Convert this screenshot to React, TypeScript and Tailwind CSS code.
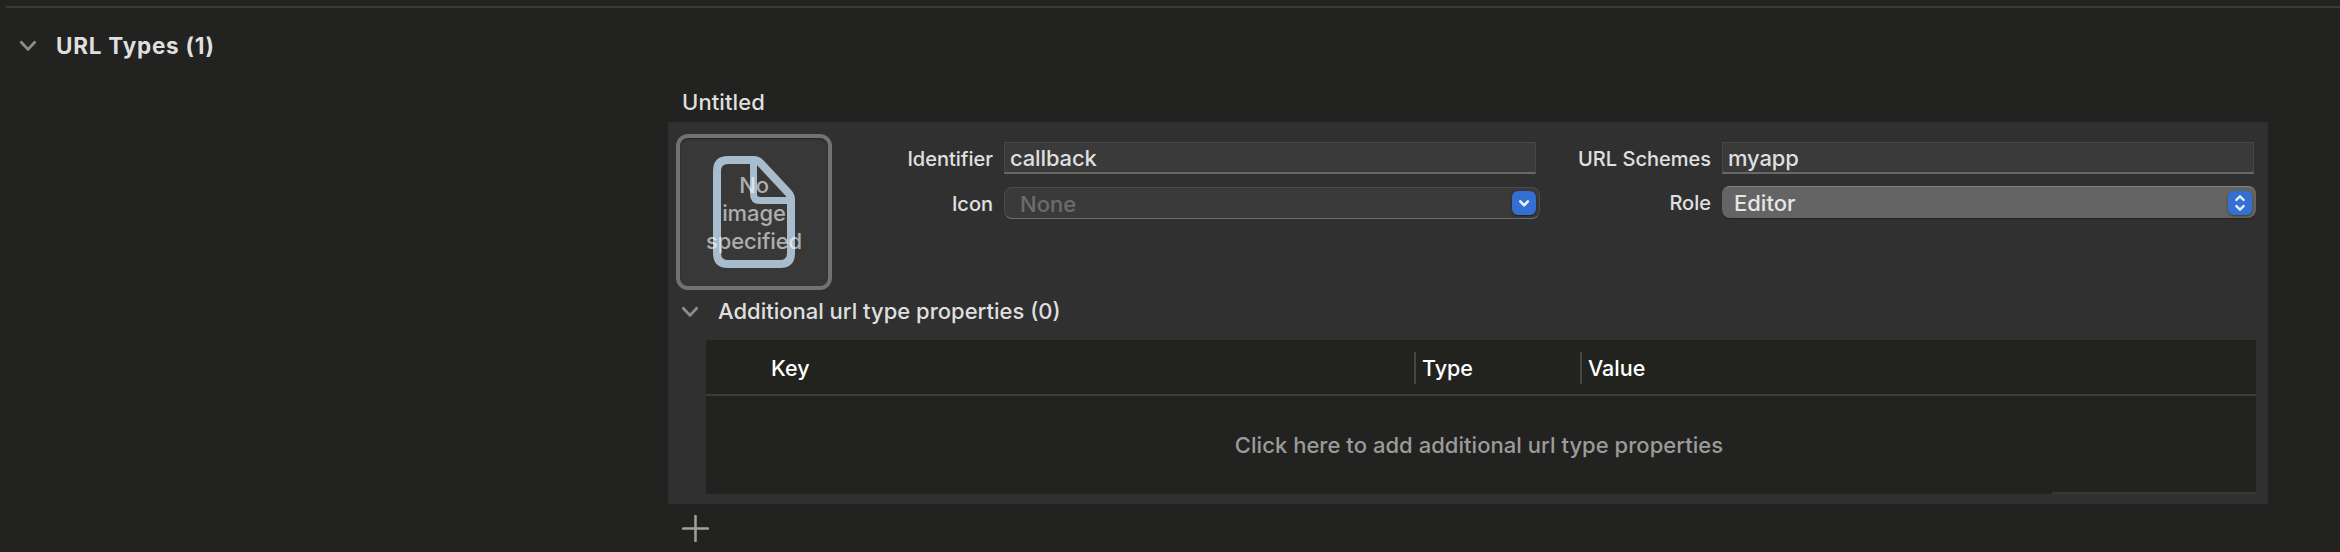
import React from "react";

const Chevron = () => (
  <svg width="18" height="12" viewBox="0 0 18 12" fill="none" stroke="#8c8c8b" strokeWidth="2.8" strokeLinecap="round" strokeLinejoin="round">
    <path d="M2.3 2.2 9 9.4l6.700-7.200" />
  </svg>
);

const Label = ({ children, className }: { children: string; className: string }) => (
  <span className={`flex shrink-0 items-center justify-end pt-0.5 text-[20px] font-medium whitespace-nowrap text-[#e0e0e0] ${className}`}>{children}</span>
);

const TextField = ({ value }: { value: string }) => (
  <div className="ml-[11px] flex w-[532px] items-center border border-b-2 border-[#484848] border-b-[#686868] bg-[#3a3a3a] pt-px pl-[5px] text-[22px] font-[450] tracking-[-0.15px]">{value}</div>
);

export default function App() {
  return (
    <main className="flex h-[552px] w-[2340px] flex-col overflow-hidden bg-[#222220] font-['Inter',sans-serif] leading-none text-[#dfdfdf]">
      <div className="mt-1.5 ml-1.5 h-0.5 shrink-0 bg-[#3a3a39]" />
      <header className="mt-[22px] flex h-8 shrink-0 items-center pl-[19px]">
        <Chevron />
        <h1 className="ml-[19px] pt-px text-[22.5px] font-bold tracking-[0.75px]">URL Types (1)</h1>
      </header>

      <section className="mt-6 ml-[668px] flex w-[1600px] flex-col">
        <h2 className="flex h-9 items-center pb-1 pl-3.5 text-[22px] font-[450] tracking-[0.1px]">Untitled</h2>
        <div className="flex h-[382px] flex-col bg-[#303030] pt-3 pr-3 pl-2">
          <div className="flex h-[156px]">
            <div className="grid h-[156px] w-[156px] shrink-0 place-items-center rounded-xl border-4 border-[#727272] bg-[#383838] shadow-[inset_0_1px_2px_#222]">
              <svg className="col-start-1 row-start-1" width="82" height="112" viewBox="0 0 82 112" fill="none" stroke="#a7bccc" strokeWidth="8" strokeLinejoin="round">
                <path d="M15 4h25.500q4 0 7 3L75 36.500q3 3 3 7V97q0 11-11 11H15Q4 108 4 97V15Q4 4 15 4Z" />
                <path d="M40.500 6v32q0 6.500 6.500 6.500h30" strokeWidth="7" />
              </svg>
              <p className="col-start-1 row-start-1 pt-px text-center text-[22px] leading-7 font-[450] tracking-[-0.1px] text-white/60">No<br />image<br />specified</p>
            </div>
            <div className="ml-[60px] flex flex-col pt-2">
              <div className="flex h-8">
                <Label className="w-[101px]">Identifier</Label>
                <TextField value="callback" />
              </div>
              <div className="mt-[13px] flex h-8">
                <Label className="w-[101px]">Icon</Label>
                <div className="ml-[11px] flex w-[536px] items-center rounded-lg border border-[#4b4b4b] border-b-[#6d6d6d] bg-[#3a3a3a] pr-[3px] pl-[15px] text-[22px] text-[#6c6c6c]">
                  <span className="grow pt-px font-[450]">None</span>
                  <svg className="rounded-md shadow-[0_1px_2px_#1c1c1c]" width="24" height="24" viewBox="0 0 24 24" fill="none">
                    <rect width="24" height="24" rx="5.500" fill="#346fd3" />
                    <path d="m8.300 10.400 3.800 4 3.800-4" stroke="#e9eefa" strokeWidth="2.600" strokeLinecap="round" strokeLinejoin="round" />
                  </svg>
                </div>
              </div>
            </div>
            <div className="ml-9 flex flex-col pt-2">
              <div className="flex h-8">
                <Label className="w-[135px]">URL Schemes</Label>
                <TextField value="myapp" />
              </div>
              <div className="mt-3 flex h-8">
                <Label className="w-[135px]">Role</Label>
                <div className="ml-[11px] flex w-[534px] items-center rounded-lg border-t border-[#858585] bg-[#646464] pr-1 pl-3 text-[22px] shadow-[0_1px_1px_#222]">
                  <span className="grow font-[450] text-[#e6e6e6]">Editor</span>
                  <svg className="rounded-md shadow-[0_1px_2px_#3a3a3a]" width="24" height="24" viewBox="0 0 24 24" fill="none">
                    <rect width="24" height="24" rx="5.500" fill="#346fd3" />
                    <path d="m8.300 9 3.700-3.700L15.700 9M8.300 15l3.700 3.700L15.700 15" stroke="#e9eefa" strokeWidth="2.400" strokeLinecap="round" strokeLinejoin="round" />
                  </svg>
                </div>
              </div>
            </div>
          </div>

          <div className="flex h-[50px] items-center pb-[7px] pl-[5px]">
            <Chevron />
            <h3 className="ml-[19px] pb-px text-[22px] font-[450]">Additional url type properties (0)</h3>
          </div>

          <div className="ml-[30px] flex h-[154px] w-[1550px] shrink-0 flex-col bg-[#222221]">
            <div className="flex h-14 shrink-0 items-center border-b-2 border-[#3d3e39] bg-[#22231e] pt-px text-[21.5px] font-medium text-white">
              <span className="w-[708px] pt-[3px] pl-[65px]">Key</span>
              <span className="flex h-8 w-[166px] items-center border-l-2 border-[#464742] pt-[3px] pl-1.5">Type</span>
              <span className="flex h-8 items-center border-l-2 border-[#464742] pt-[3px] pl-1.5">Value</span>
            </div>
            <p className="flex grow items-center justify-center pt-px pr-1 text-[22px] font-[450] tracking-[0.04px] text-[#9b9b9a]">Click here to add additional url type properties</p>
            <div className="h-0.5 w-[204px] self-end bg-[#373735]" />
          </div>
        </div>
        <div className="flex h-12 items-start pt-[11px] pl-3.5">
          <svg width="27" height="27" viewBox="0 0 27 27" stroke="#a0a09f" strokeWidth="2.500" strokeLinecap="round">
            <path d="M1 13.500h25M13.500 1v25" />
          </svg>
        </div>
      </section>
    </main>
  );
}
